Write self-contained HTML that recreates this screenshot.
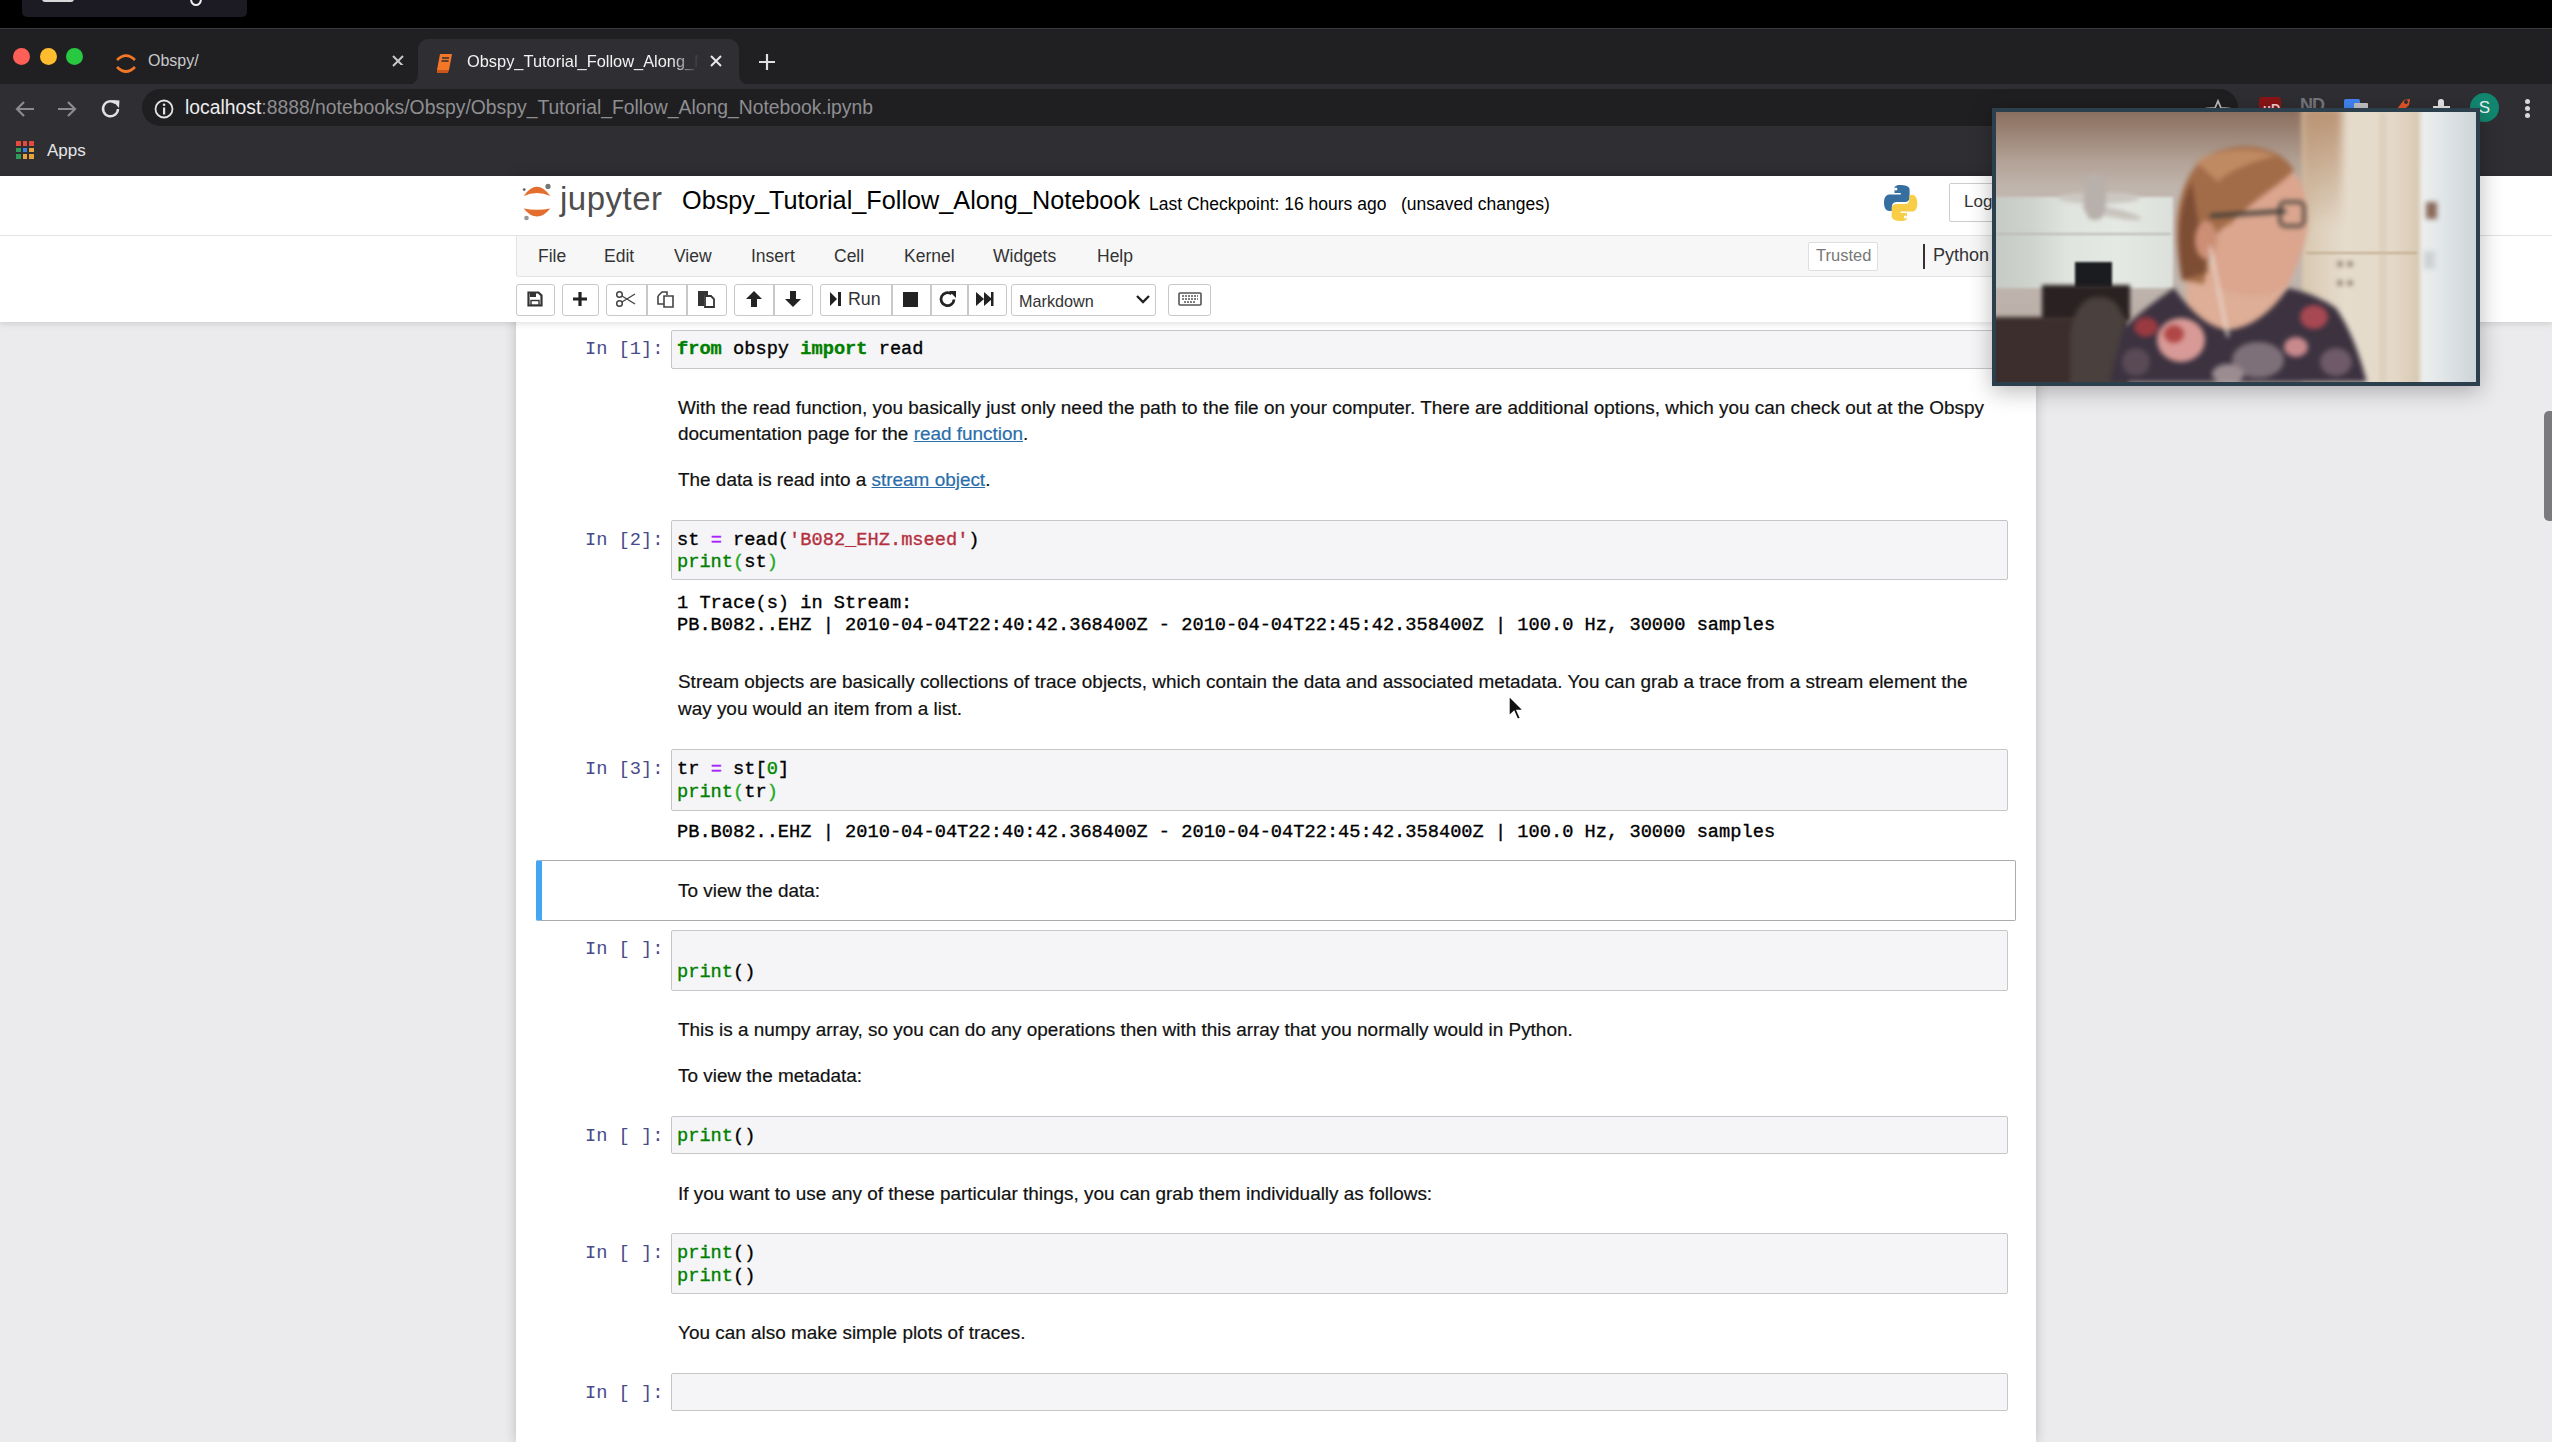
<!DOCTYPE html>
<html><head><meta charset="utf-8">
<style>
*{box-sizing:border-box;margin:0;padding:0}
html,body{width:2552px;height:1442px;overflow:hidden;background:#ebeaec;font-family:"Liberation Sans",sans-serif}
.a{position:absolute}
#topbar{left:0;top:0;width:2552px;height:28px;background:#000}
#tabbar{left:0;top:28px;width:2552px;height:56px;background:#202023;border-top:1px solid #3a3a3c}
#toolbar{left:0;top:84px;width:2552px;height:92px;background:#2f2f33}
.tl{width:17px;height:17px;border-radius:50%}
.tabtxt{font-size:16px;color:#c9c9cb;white-space:nowrap}
#omni{left:142px;top:89px;width:2096px;height:37px;background:#1f1f22;border-radius:19px}
.url{font-size:19.33px;color:#8e8e91;white-space:nowrap}
#hdr{z-index:2;left:0;top:176px;width:2552px;height:146px;background:#fff;box-shadow:0 2px 6px rgba(0,0,0,.12)}
#container{left:516px;top:176px;width:1520px;height:1266px;background:#fff;box-shadow:0 0 12px rgba(0,0,0,.2)}
.md{font-size:18.93px;color:#111;white-space:nowrap;line-height:26.2px;-webkit-text-stroke:0.2px currentColor}
.code{font-family:"Liberation Mono",monospace;font-size:18.68px;white-space:pre;line-height:22.7px;color:#000;-webkit-text-stroke:0.35px currentColor}
.prompt{font-family:"Liberation Mono",monospace;font-size:18.68px;line-height:22.7px;white-space:pre;color:#474b8a}
.box{background:#f5f5f7;border:1.5px solid #c6c6c8;border-radius:2px}
.kw{color:#008000;font-weight:bold}
.bi{color:#008000}
.op{color:#aa22ff}
.str{color:#b5303f}
.num{color:#080}
.mb{color:#22aa22}
.tb{top:108px;height:32px;border:1.5px solid #c9c9cb;border-radius:3px;background:#fff}
.tbd{top:108px;width:1.5px;height:32px;background:#c9c9cb}
a{color:#296eaa;text-decoration:underline}
</style></head><body>
<div id="topbar" class="a">
  <div class="a" style="left:22px;top:-10px;width:225px;height:26.5px;background:#1c1b24;border-radius:5px"></div>
  <div class="a" style="left:42px;top:-6px;width:32px;height:8px;background:#d8d8d8;border-radius:3px"></div>
  <svg class="a" style="left:188px;top:0" width="16" height="8" viewBox="0 0 16 8"><path d="M3 0 Q4 5 8 5 Q12 5 13 0" fill="none" stroke="#eee" stroke-width="2"/></svg>
</div>
<div id="tabbar" class="a">
  <div class="a tl" style="left:12.5px;top:19px;background:#fe5f57"></div>
  <div class="a tl" style="left:39.5px;top:19px;background:#febc2e"></div>
  <div class="a tl" style="left:66px;top:19px;background:#28c840"></div>
  <svg class="a" style="left:115px;top:23px" width="22" height="24" viewBox="0 0 22 24"><path d="M2 8 Q11 -1 20 8" fill="none" stroke="#f37726" stroke-width="2.6"/><path d="M2 15 Q11 24 20 15" fill="none" stroke="#f37726" stroke-width="2.6"/></svg>
  <div class="a tabtxt" style="left:148px;top:23px">Obspy/</div>
  <svg class="a" style="left:391px;top:25px" width="14" height="14" viewBox="0 0 14 14"><path d="M2 2L12 12M12 2L2 12" stroke="#c8c8ca" stroke-width="2"/></svg>
  <div class="a" style="left:409px;top:46px;width:339px;height:10px;background:#2f2f33"></div>
  <div class="a" style="left:399px;top:36px;width:19px;height:20px;background:#202023;border-bottom-right-radius:10px"></div>
  <div class="a" style="left:739px;top:36px;width:19px;height:20px;background:#202023;border-bottom-left-radius:10px"></div>
  <div class="a" style="left:418px;top:10px;width:321px;height:46px;background:#2f2f33;border-radius:10px 10px 0 0"></div>
  <svg class="a" style="left:434px;top:23px" width="22" height="22" viewBox="0 0 22 22"><path d="M6 2h12l-3 16H3z" fill="#f37726"/><path d="M3 18h12l-1 3H3z" fill="#c8561a"/><path d="M8 6h7M7.5 9h7" stroke="#2f2f33" stroke-width="1.5"/></svg>
  <div class="a tabtxt" style="left:467px;top:23px;color:#f2f2f2;width:232px;overflow:hidden;font-size:16.4px;-webkit-mask-image:linear-gradient(90deg,#000 88%,transparent 100%)">Obspy_Tutorial_Follow_Along_Notebook</div>
  <svg class="a" style="left:709px;top:25px" width="14" height="14" viewBox="0 0 14 14"><path d="M2 2L12 12M12 2L2 12" stroke="#e8e8ea" stroke-width="2"/></svg>
  <svg class="a" style="left:758px;top:24px" width="18" height="18" viewBox="0 0 18 18"><path d="M9 1V17M1 9H17" stroke="#e0e0e2" stroke-width="2.2"/></svg>
</div>
<div id="toolbar" class="a">
  <svg class="a" style="left:14px;top:14px" width="22" height="22" viewBox="0 0 22 22"><path d="M20 11H3M10 4L3 11L10 18" fill="none" stroke="#8b8b8e" stroke-width="2.2"/></svg>
  <svg class="a" style="left:56px;top:14px" width="22" height="22" viewBox="0 0 22 22"><path d="M2 11H19M12 4L19 11L12 18" fill="none" stroke="#8b8b8e" stroke-width="2.2"/></svg>
  <svg class="a" style="left:99px;top:13px" width="24" height="24" viewBox="0 0 24 24"><path d="M19 12A7.5 7.5 0 1 1 16.5 6.2" fill="none" stroke="#e2e2e4" stroke-width="2.4"/><path d="M13 3L20.5 3.5L20 11Z" fill="#e2e2e4"/></svg>
  <div id="omni" class="a" style="top:5px"></div>
  <svg class="a" style="left:153px;top:14px" width="22" height="22" viewBox="0 0 22 22"><circle cx="11" cy="11" r="8.5" fill="none" stroke="#e2e2e4" stroke-width="1.8"/><rect x="10" y="9.5" width="2.2" height="7" fill="#e2e2e4"/><circle cx="11.1" cy="6.8" r="1.3" fill="#e2e2e4"/></svg>
  <div class="a url" style="left:185px;top:13px"><span style="color:#ececee">localhost</span>:8888/notebooks/Obspy/Obspy_Tutorial_Follow_Along_Notebook.ipynb</div>
  <svg class="a" style="left:2205px;top:14px" width="26" height="24" viewBox="0 0 26 24"><path d="M13 3L16 10L23.5 10.5L17.8 15.3L19.6 22.5L13 18.5L6.4 22.5L8.2 15.3L2.5 10.5L10 10Z" fill="none" stroke="#c0c0c2" stroke-width="1.8"/></svg>
  <div class="a" style="left:2259px;top:13px;width:22px;height:22px;background:#8a1416;border-radius:3px 3px 10px 10px"></div>
  <div class="a" style="left:2263px;top:17px;font-size:13px;font-weight:bold;color:#f3d2d2">uD</div>
  <div class="a" style="left:2300px;top:11px;font-size:18px;font-weight:bold;color:#77777a;letter-spacing:-1px">ND</div>
  <div class="a" style="left:2344px;top:15px;width:16px;height:17px;background:#4285f4;border-radius:2px"></div>
  <div class="a" style="left:2354px;top:19px;width:14px;height:13px;background:#c4c4c6;border-radius:1px"></div>
  <svg class="a" style="left:2386px;top:11px" width="26" height="26" viewBox="0 0 26 26"><path d="M3 24L18 5L24 4L23 10L8 25Z" fill="#e8562a"/><circle cx="20" cy="7" r="2" fill="#2f2f33"/></svg>
  <svg class="a" style="left:2430px;top:13px" width="24" height="22" viewBox="0 0 24 22"><path d="M3 9h5V5a3 3 0 0 1 6 0v4h6v12H3z" fill="#e6e6e8"/></svg>
  <div class="a" style="left:2470px;top:9px;width:29px;height:29px;border-radius:50%;background:#12876f;color:#e8f5f2;font-size:17px;text-align:center;line-height:29px">S</div>
  <div class="a" style="left:2525px;top:15px;width:5px;height:5px;border-radius:50%;background:#d8d8da;box-shadow:0 7px 0 #d8d8da,0 14px 0 #d8d8da"></div>
  <div class="a" style="left:16.0px;top:57.0px;width:4.5px;height:4.5px;background:#e34b3f"></div><div class="a" style="left:22.5px;top:57.0px;width:4.5px;height:4.5px;background:#e34b3f"></div><div class="a" style="left:29.0px;top:57.0px;width:4.5px;height:4.5px;background:#e34b3f"></div><div class="a" style="left:16.0px;top:63.5px;width:4.5px;height:4.5px;background:#2f9a5a"></div><div class="a" style="left:22.5px;top:63.5px;width:4.5px;height:4.5px;background:#3b82e0"></div><div class="a" style="left:29.0px;top:63.5px;width:4.5px;height:4.5px;background:#e8a33a"></div><div class="a" style="left:16.0px;top:70.0px;width:4.5px;height:4.5px;background:#2f9a5a"></div><div class="a" style="left:22.5px;top:70.0px;width:4.5px;height:4.5px;background:#e8a33a"></div><div class="a" style="left:29.0px;top:70.0px;width:4.5px;height:4.5px;background:#e8a33a"></div>
  <div class="a" style="left:47px;top:57px;font-size:17px;color:#e6e6e8">Apps</div>
</div>
<div id="hdr" class="a">
  <svg class="a" style="left:520px;top:7px" width="34" height="44" viewBox="0 0 34 44" overflow="visible">
    <path d="M3.6 13 Q17 -5.4 30.3 13 Q17 7 3.6 13Z" fill="#e46e2e"/>
    <path d="M3.6 25.4 Q17 41.6 30.3 25.4 Q17 28 3.6 25.4Z" fill="#e46e2e"/>
    <circle cx="28" cy="3.4" r="2.6" fill="#767677"/>
    <circle cx="4.2" cy="6.6" r="1.4" fill="#616262"/>
    <circle cx="6.5" cy="35" r="2.3" fill="#989798"/>
  </svg>
  <div class="a" style="left:560px;top:4px;font-size:33px;color:#4e4e4e;letter-spacing:0.5px">jupyter</div>
  <div class="a" style="left:682px;top:10px;font-size:25.25px;color:#000">Obspy_Tutorial_Follow_Along_Notebook</div>
  <div class="a" style="left:1149px;top:18px;font-size:17.5px;color:#000">Last Checkpoint: 16 hours ago</div>
  <div class="a" style="left:1401px;top:18px;font-size:17.5px;color:#000">(unsaved changes)</div>
  <svg class="a" style="left:1882px;top:8px" width="38" height="38" viewBox="0 0 38 38">
    <path d="M18.5 1C12 1 12.5 3.8 12.5 3.8V9h6.3v1.5H7.6S2 10 2 18.6s4.9 8.3 4.9 8.3h3V22.8s-.2-4.9 4.8-4.9h8.2s4.7.1 4.7-4.5V5.6S28.3 1 18.5 1zm-4.6 2.6a1.5 1.5 0 1 1 0 3 1.5 1.5 0 0 1 0-3z" fill="#366e9f"/>
    <path d="M18.8 37c6.5 0 6.1-2.8 6.1-2.8V29h-6.3v-1.5h11.2s5.5.6 5.5-8.1-4.9-8.3-4.9-8.3h-3v4.1s.2 4.9-4.8 4.9h-8.2s-4.7-.1-4.7 4.5v7.7S9 37 18.8 37zm4.6-2.6a1.5 1.5 0 1 1 0-3 1.5 1.5 0 0 1 0 3z" fill="#f7ce45"/>
  </svg>
  <div class="a" style="left:1949px;top:7px;width:60px;height:39px;border:1.5px solid #ccc;border-radius:2px;background:#fff"></div>
  <div class="a" style="left:1964px;top:16px;font-size:17px;color:#333">Login</div>
  <div class="a" style="left:0;top:59px;width:2552px;height:1.3px;background:#e2e2e4"></div>
  <div class="a" style="left:516px;top:60px;width:1520px;height:41px;background:#f7f7f8;border:1.3px solid #e3e3e5;border-top:none;border-radius:0 0 3px 3px"></div>
  <div class="a" style="left:538px;top:70px;font-size:17.5px;color:#333;word-spacing:0">File</div>
  <div class="a" style="left:604px;top:70px;font-size:17.5px;color:#333">Edit</div>
  <div class="a" style="left:674px;top:70px;font-size:17.5px;color:#333">View</div>
  <div class="a" style="left:751px;top:70px;font-size:17.5px;color:#333">Insert</div>
  <div class="a" style="left:834px;top:70px;font-size:17.5px;color:#333">Cell</div>
  <div class="a" style="left:904px;top:70px;font-size:17.5px;color:#333">Kernel</div>
  <div class="a" style="left:993px;top:70px;font-size:17.5px;color:#333">Widgets</div>
  <div class="a" style="left:1097px;top:70px;font-size:17.5px;color:#333">Help</div>
  <div class="a" style="left:1808px;top:66px;width:70px;height:29px;border:1.5px solid #dedede;background:#fff;border-radius:2px"></div>
  <div class="a" style="left:1816px;top:70px;font-size:16.5px;color:#777">Trusted</div>
  <div class="a" style="left:1923px;top:68px;width:2px;height:25px;background:#333"></div>
  <div class="a" style="left:1933px;top:69px;font-size:18px;color:#333">Python 3</div>
  <div class="tb a" style="left:516px;width:39px"></div>
  <div class="tb a" style="left:562px;width:37px"></div>
  <div class="tb a" style="left:606px;width:121px"></div>
  <div class="a tbd" style="left:646px"></div><div class="a tbd" style="left:686px"></div>
  <div class="tb a" style="left:734px;width:79px"></div>
  <div class="a tbd" style="left:773px"></div>
  <div class="tb a" style="left:820px;width:187px"></div>
  <div class="a tbd" style="left:891px"></div><div class="a tbd" style="left:930px"></div><div class="a tbd" style="left:967px"></div>
  <div class="tb a" style="left:1011px;width:145px"></div>
  <div class="tb a" style="left:1168px;width:43px"></div>
  <!-- icons -->
  <svg class="a" style="left:526px;top:114px" width="18" height="18" viewBox="0 0 18 18"><path d="M2.5 2.5h10l3 3v10h-13z" fill="none" stroke="#333" stroke-width="2.2"/><rect x="4" y="3" width="6" height="4" fill="#333"/><rect x="5" y="10.5" width="8" height="4.5" fill="#fff" stroke="#333" stroke-width="1.4"/></svg>
  <svg class="a" style="left:571px;top:114px" width="18" height="18" viewBox="0 0 18 18"><path d="M9 2V16M2 9H16" stroke="#222" stroke-width="3.2"/></svg>
  <svg class="a" style="left:615px;top:114px" width="22" height="18" viewBox="0 0 22 18"><circle cx="4.5" cy="4.5" r="2.8" fill="none" stroke="#444" stroke-width="1.5"/><circle cx="4.5" cy="13.5" r="2.8" fill="none" stroke="#444" stroke-width="1.5"/><path d="M7 6L20 14M7 12L20 4" stroke="#444" stroke-width="1.4"/></svg>
  <svg class="a" style="left:656px;top:113px" width="20" height="20" viewBox="0 0 20 20"><path d="M2 7L6 3h5v3" fill="none" stroke="#444" stroke-width="1.6"/><path d="M2 7v8h6" fill="none" stroke="#444" stroke-width="1.6"/><path d="M8 7h9v11H8z" fill="none" stroke="#444" stroke-width="1.6"/></svg>
  <svg class="a" style="left:696px;top:113px" width="20" height="20" viewBox="0 0 20 20"><path d="M2 2h10v4H8v11H2z" fill="#333"/><path d="M9 7h6l3 3v8H9z" fill="none" stroke="#333" stroke-width="1.8"/></svg>
  <svg class="a" style="left:744px;top:114px" width="20" height="18" viewBox="0 0 20 18"><path d="M10 1L2 9h5v8h6V9h5z" fill="#222"/></svg>
  <svg class="a" style="left:783px;top:114px" width="20" height="18" viewBox="0 0 20 18"><path d="M10 17L2 9h5V1h6v8h5z" fill="#222"/></svg>
  <svg class="a" style="left:829px;top:115px" width="14" height="16" viewBox="0 0 14 16"><path d="M1 1L8 8L1 15z" fill="#222"/><rect x="9" y="1" width="3" height="14" fill="#222"/></svg>
  <div class="a" style="left:848px;top:113px;font-size:17.8px;color:#333">Run</div>
  <div class="a" style="left:903px;top:116px;width:15px;height:15px;background:#222"></div>
  <svg class="a" style="left:938px;top:113px" width="20" height="20" viewBox="0 0 20 20"><path d="M16 10.5A6.5 6.5 0 1 1 13.5 5" fill="none" stroke="#222" stroke-width="2.8"/><path d="M11 2h7v7z" fill="#222"/></svg>
  <svg class="a" style="left:975px;top:115px" width="20" height="16" viewBox="0 0 20 16"><path d="M1 1L9 8L1 15zM9 1L17 8L9 15z" fill="#222"/><rect x="16" y="1" width="2.5" height="14" fill="#222"/></svg>
  <div class="a" style="left:1019px;top:116px;font-size:16.2px;color:#333">Markdown</div>
  <svg class="a" style="left:1135px;top:118px" width="16" height="11" viewBox="0 0 16 11"><path d="M2 2L8 8L14 2" fill="none" stroke="#222" stroke-width="2.4"/></svg>
  <svg class="a" style="left:1178px;top:116px" width="24" height="14" viewBox="0 0 24 14"><rect x="1" y="1" width="22" height="12" rx="1" fill="none" stroke="#555" stroke-width="1.6"/><path d="M4 4h16M4 7h16M6 10h12" stroke="#555" stroke-width="1.4" stroke-dasharray="2 1"/></svg>
</div>
<div id="container" class="a"></div>
<div id="nb">
<div class="a box" style="left:671px;top:329.5px;width:1337px;height:39.2px"></div>
<div class="a prompt" style="left:585px;top:337.88px">In [1]:</div>
<div class="a code" style="left:677px;top:337.88px"><span class="kw">from</span> obspy <span class="kw">import</span> read</div>
<div class="a md" style="left:678px;top:394.94px">With the read function, you basically just only need the path to the file on your computer. There are additional options, which you can check out at the Obspy</div>
<div class="a md" style="left:678px;top:421.14px">documentation page for the <a>read function</a>.</div>
<div class="a md" style="left:678px;top:466.74px">The data is read into a <a>stream object</a>.</div>
<div class="a box" style="left:671px;top:519.5px;width:1337px;height:60.8px"></div>
<div class="a prompt" style="left:585px;top:528.88px">In [2]:</div>
<div class="a code" style="left:677px;top:528.88px">st <span class="op">=</span> read(<span class="str">'B082_EHZ.mseed'</span>)</div>
<div class="a code" style="left:677px;top:551.38px"><span class="bi">print</span><span class="mb">(</span>st<span class="mb">)</span></div>
<div class="a code" style="left:677px;top:591.58px">1 Trace(s) in Stream:</div>
<div class="a code" style="left:677px;top:614.08px">PB.B082..EHZ | 2010-04-04T22:40:42.368400Z - 2010-04-04T22:45:42.358400Z | 100.0 Hz, 30000 samples</div>
<div class="a md" style="left:678px;top:669.44px">Stream objects are basically collections of trace objects, which contain the data and associated metadata. You can grab a trace from a stream element the</div>
<div class="a md" style="left:678px;top:695.84px">way you would an item from a list.</div>
<div class="a box" style="left:671px;top:748.8px;width:1337px;height:62.4px"></div>
<div class="a prompt" style="left:585px;top:758.08px">In [3]:</div>
<div class="a code" style="left:677px;top:758.08px">tr <span class="op">=</span> st[<span class="num">0</span>]</div>
<div class="a code" style="left:677px;top:780.58px"><span class="bi">print</span><span class="mb">(</span>tr<span class="mb">)</span></div>
<div class="a code" style="left:677px;top:820.58px">PB.B082..EHZ | 2010-04-04T22:40:42.368400Z - 2010-04-04T22:45:42.358400Z | 100.0 Hz, 30000 samples</div>
<div class="a" style="left:536px;top:860px;width:1480px;height:61px;border:1.4px solid #ababab;border-left:6.5px solid #42a5f5;border-radius:2px"></div>
<div class="a md" style="left:678px;top:877.54px">To view the data:</div>
<div class="a box" style="left:671px;top:929.8px;width:1337px;height:61.7px"></div>
<div class="a prompt" style="left:585px;top:938.38px">In [ ]:</div>
<div class="a code" style="left:677px;top:960.58px"><span class="bi">print</span>()</div>
<div class="a md" style="left:678px;top:1016.84px">This is a numpy array, so you can do any operations then with this array that you normally would in Python.</div>
<div class="a md" style="left:678px;top:1062.94px">To view the metadata:</div>
<div class="a box" style="left:671px;top:1115.5px;width:1337px;height:38.2px"></div>
<div class="a prompt" style="left:585px;top:1125.18px">In [ ]:</div>
<div class="a code" style="left:677px;top:1125.18px"><span class="bi">print</span>()</div>
<div class="a md" style="left:678px;top:1180.94px">If you want to use any of these particular things, you can grab them individually as follows:</div>
<div class="a box" style="left:671px;top:1232.8px;width:1337px;height:61.2px"></div>
<div class="a prompt" style="left:585px;top:1242.08px">In [ ]:</div>
<div class="a code" style="left:677px;top:1242.08px"><span class="bi">print</span>()</div>
<div class="a code" style="left:677px;top:1264.58px"><span class="bi">print</span>()</div>
<div class="a md" style="left:678px;top:1319.94px">You can also make simple plots of traces.</div>
<div class="a box" style="left:671px;top:1373px;width:1337px;height:38.2px"></div>
<div class="a prompt" style="left:585px;top:1382.18px">In [ ]:</div>
</div>
<div id="cam" class="a" style="z-index:10;left:1992px;top:108px;width:488px;height:278px;background:#2c3f4c;box-shadow:0 5px 22px rgba(0,0,0,.28)">
 <div class="a" style="left:4px;top:4px;width:480px;height:270px;overflow:hidden;background:#a8968a">
  <div class="a" style="left:0;top:0;width:480px;height:270px;background:linear-gradient(180deg,#8a6f60 0%,#9c8576 8%,#b2a196 18%,#c0b5ad 28%,#c2b8b1 55%,#b3a69e 100%)"></div>
  <div class="a" style="left:-5px;top:85px;width:182px;height:91px;background:linear-gradient(90deg,#c5c9c4 0%,#cfd3cd 22%,#e0e4df 42%,#e5e9e4 70%,#dce0db 100%);filter:blur(1.5px)"></div>
  <div class="a" style="left:0px;top:121px;width:175px;height:2px;background:#b9bbb6;filter:blur(1px)"></div>
  <div class="a" style="left:62px;top:80px;width:82px;height:12px;background:#cbc6c0;border-radius:50%;filter:blur(2px)"></div>
  <div class="a" style="left:86px;top:96px;width:60px;height:9px;background:#c8c3bd;border-radius:50%;transform:rotate(12deg);filter:blur(2px)"></div>
  <div class="a" style="left:88px;top:62px;width:22px;height:46px;background:#b8b0aa;border-radius:40%;filter:blur(2px)"></div>
  <div class="a" style="left:79px;top:150px;width:37px;height:26px;background:#1b1c20;filter:blur(1px)"></div>
  <div class="a" style="left:46px;top:173px;width:88px;height:36px;background:#2a2222;filter:blur(2px)"></div>
  <div class="a" style="left:-5px;top:205px;width:135px;height:75px;background:#3b2e2c;filter:blur(2px)"></div>
  <div class="a" style="left:74px;top:185px;width:58px;height:95px;background:#4a403d;border-radius:45% 45% 10% 10%;filter:blur(2.5px)"></div>
  <div class="a" style="left:306px;top:-5px;width:122px;height:285px;background:linear-gradient(90deg,#d8c8b0 0%,#e6dccd 35%,#e4d9c8 75%,#d6c6ae 100%);filter:blur(2px)"></div>
  <div class="a" style="left:306px;top:-5px;width:40px;height:120px;background:linear-gradient(180deg,#b89070,rgba(200,170,130,0));filter:blur(4px)"></div>
  <div class="a" style="left:310px;top:140px;width:112px;height:2px;background:#c2ad90;filter:blur(1px)"></div>
  <div class="a" style="left:424px;top:-5px;width:60px;height:285px;background:linear-gradient(90deg,#eef0ee 0%,#e0e5e7 40%,#cbd3d7 100%);filter:blur(2px)"></div>
  <div class="a" style="left:190px;top:150px;width:100px;height:78px;background:#deae96;border-radius:10% 10% 45% 45%;filter:blur(3px)"></div>
  <svg class="a" style="left:0;top:0;filter:blur(2.5px)" width="480" height="270" viewBox="0 0 480 270">
    <path d="M112 275 L128 215 Q150 195 178 176 Q205 215 232 218 Q265 215 292 176 Q320 182 340 196 Q360 225 372 275Z" fill="#3c3240"/>
    <ellipse cx="185" cy="228" rx="24" ry="22" fill="#d89a96"/>
    <ellipse cx="178" cy="222" rx="10" ry="9" fill="#b04646"/>
    <ellipse cx="150" cy="215" rx="12" ry="10" fill="#9a3a40"/>
    <ellipse cx="140" cy="250" rx="14" ry="14" fill="#5a4a56"/>
    <ellipse cx="262" cy="248" rx="26" ry="18" fill="#7e7078"/>
    <ellipse cx="232" cy="262" rx="16" ry="10" fill="#9a8c90"/>
    <ellipse cx="318" cy="205" rx="14" ry="12" fill="#a84852"/>
    <ellipse cx="300" cy="235" rx="12" ry="10" fill="#c98a8e"/>
    <ellipse cx="340" cy="250" rx="16" ry="14" fill="#6e5a68"/>
  </svg>
  <svg class="a" style="left:0;top:0;filter:blur(2.5px)" width="480" height="270" viewBox="0 0 480 270">
    <path d="M222 70 C240 50 290 45 305 70 C312 90 314 110 310 125 C306 140 300 160 290 175 C270 188 235 186 215 170 Z" fill="#dba58e"/>
    <path d="M186 168 C176 120 178 62 215 42 C245 28 285 34 298 58 C290 68 270 80 256 92 C246 100 240 106 234 112 C222 116 214 130 212 150 L208 172 Z" fill="#a36c49"/>
    <path d="M200 50 C220 36 260 34 280 44 C262 48 236 56 222 70 Z" fill="#bf8a62"/>
    <path d="M186 168 C180 130 182 95 196 70 C200 100 206 130 212 160 Z" fill="#7d4d34"/>
    <ellipse cx="210" cy="128" rx="11" ry="19" fill="#cc8f76"/>
    <path d="M214 104 L290 99" stroke="#3b3a35" stroke-width="4"/>
    <rect x="284" y="90" width="24" height="24" rx="5" fill="none" stroke="#3a3a36" stroke-width="3"/>
    <path d="M214 135 L232 225" stroke="#eadfd8" stroke-width="2.5"/>
    <circle cx="344" cy="152" r="2.2" fill="#4a3a2a"/><circle cx="354" cy="152" r="2.2" fill="#4a3a2a"/>
    <circle cx="344" cy="171" r="2.2" fill="#4a3a2a"/><circle cx="354" cy="171" r="2.2" fill="#4a3a2a"/>
    <path d="M387 0V270" stroke="#cdb9a0" stroke-width="2"/>
    <rect x="430" y="90" width="11" height="17" fill="#8a6a5a"/>
    <rect x="428" y="139" width="11" height="18" fill="#cfd2d4"/>
  </svg>
 </div>
</div>
<div id="cursor" class="a" style="z-index:11;left:1506.5px;top:695px">
 <svg width="20" height="28" viewBox="0 0 20 28"><path d="M2 1V21L7 16.5L10.5 24.5L13.5 23.2L10 15.5H16.5Z" fill="#111" stroke="#fff" stroke-width="1.4"/></svg>
</div>
<div class="a" style="z-index:3;left:2544px;top:410.5px;width:12px;height:110.5px;background:#7a7a7c;border-radius:5px"></div>
</body></html>
